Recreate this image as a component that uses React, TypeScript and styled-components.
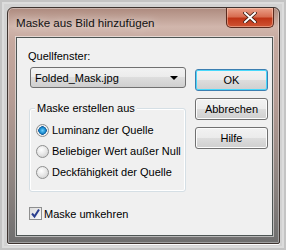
import styled, { createGlobalStyle } from 'styled-components';

const Global = createGlobalStyle`
  html, body {
    margin: 0;
    padding: 0;
    background: #d2d2d2;
  }
  body {
    font-family: "Liberation Sans", Arial, sans-serif;
    font-size: 11px;
    color: #000;
  }
`;

const radios = [
  { id: 1, label: 'Luminanz der Quelle', checked: true },
  { id: 2, label: 'Beliebiger Wert außer Null', checked: false },
  { id: 3, label: 'Deckfähigkeit der Quelle', checked: false },
];

export default function App() {
  return (
    <>
      <Global />
      <Screen>
        <Window>
          <TitleBar>
            <Title>Maske aus Bild hinzufügen</Title>
            <CloseButton>
              <svg width="14" height="11" viewBox="0 0 14 11">
                <path
                  d="M2 1 L12 10 M12 1 L2 10"
                  stroke="#3a1a10"
                  strokeWidth="3.6"
                  strokeLinecap="square"
                />
                <path
                  d="M2 1 L12 10 M12 1 L2 10"
                  stroke="#fff"
                  strokeWidth="2"
                  strokeLinecap="square"
                />
              </svg>
            </CloseButton>
          </TitleBar>
          <Client>
            <Main>
              <FieldLabel>Quellfenster:</FieldLabel>
              <Select>
                <span>Folded_Mask.jpg</span>
                <Caret />
              </Select>
              <Group>
                <Legend>Maske erstellen aus</Legend>
                {radios.map(({ id, label, checked }) => (
                  <Option key={id}>
                    <Radio $checked={checked} />
                    <span>{label}</span>
                  </Option>
                ))}
              </Group>
              <CheckRow>
                <CheckBox>
                  <svg width="11" height="11" viewBox="0 0 11 11">
                    <path
                      d="M2 5.5 L4.5 8.5 L9 1.5"
                      stroke="#2b3f8f"
                      strokeWidth="2"
                      fill="none"
                    />
                  </svg>
                </CheckBox>
                <span>Maske umkehren</span>
              </CheckRow>
            </Main>
            <Side>
              <Button $default>OK</Button>
              <Button>Abbrechen</Button>
              <Button>Hilfe</Button>
            </Side>
          </Client>
        </Window>
      </Screen>
    </>
  );
}

const Screen = styled.div`
  width: 286px;
  height: 250px;
  box-sizing: border-box;
  padding: 7px 6px 6px 7px;
  background: #d2d2d2;
  box-shadow: inset 0 0 0 2px #c4c4c4, inset 0 0 0 4px #dcdcdc;
`;

const Window = styled.div`
  height: 237px;
  box-sizing: border-box;
  display: flex;
  flex-direction: column;
  padding: 0 6px 7px 8px;
  border: 1px solid #3e3430;
  border-radius: 6px 6px 2px 2px;
  background: linear-gradient(
    180deg,
    #ad8a7e 0%,
    #d1b6ac 8%,
    #c6a99f 14%,
    #b59c94 40%,
    #8d8480 75%,
    #6e6e6e 100%
  );
  box-shadow: inset 0 0 0 1px rgba(255, 255, 255, 0.35), 0 1px 0 #fff;
`;

const TitleBar = styled.div`
  height: 29px;
  display: flex;
  align-items: flex-start;
  justify-content: space-between;
`;

const Title = styled.div`
  padding-top: 8px;
  font-size: 11.6px;
  color: #111;
  white-space: nowrap;
  text-shadow: 0 0 8px rgba(255, 255, 255, 0.8);
`;

const CloseButton = styled.div`
  width: 46px;
  height: 19px;
  margin-right: -1px;
  display: flex;
  align-items: center;
  justify-content: center;
  border: 1px solid #5a2a1e;
  border-top: none;
  border-radius: 0 0 5px 5px;
  background: linear-gradient(180deg, #eba18a 0%, #d86e52 45%, #bf3517 55%, #cf5434 100%);
  box-shadow: inset 0 0 0 1px rgba(255, 220, 200, 0.45);
`;

const Client = styled.div`
  flex: 1;
  display: flex;
  background: #f0f0f0;
  border: 1px solid #4d5554;
  box-shadow: 0 0 0 1px rgba(255, 255, 255, 0.5);
`;

const Main = styled.div`
  width: 168px;
  padding: 10px 0 0 11px;
  box-sizing: border-box;
  display: flex;
  flex-direction: column;
  white-space: nowrap;
`;

const FieldLabel = styled.div`
  height: 19px;
  line-height: 17px;
`;

const Select = styled.div`
  width: 156px;
  height: 21px;
  box-sizing: border-box;
  margin-left: 2px;
  padding: 0 7px 0 4px;
  display: flex;
  align-items: center;
  justify-content: space-between;
  border: 1px solid #707070;
  border-radius: 3px;
  background: linear-gradient(180deg, #f2f2f2 0%, #ebebeb 50%, #dddddd 50%, #cfcfcf 100%);
`;

const Caret = styled.div`
  width: 0;
  height: 0;
  border-left: 4px solid transparent;
  border-right: 4px solid transparent;
  border-top: 4px solid #000;
`;

const Group = styled.div`
  position: relative;
  margin: 20px 0 0 1px;
  width: 157px;
  height: 84px;
  box-sizing: border-box;
  padding: 13px 0 0 6px;
  border: 1px solid #d5dfe5;
  border-radius: 3px;
  box-shadow: inset 0 0 0 1px #fff;
  display: flex;
  flex-direction: column;
  gap: 5px;
`;

const Legend = styled.div`
  position: absolute;
  top: -8px;
  left: 5px;
  padding: 0 2px;
  background: #f0f0f0;
  line-height: 15px;
`;

const Option = styled.div`
  display: flex;
  align-items: center;
  gap: 3px;
  height: 16px;
`;

const Radio = styled.div<{ $checked?: boolean }>`
  width: 13px;
  height: 13px;
  box-sizing: border-box;
  border-radius: 50%;
  border: 1px solid #8e8f8f;
  background: ${({ $checked }) =>
    $checked
      ? 'radial-gradient(circle, #6fd0ff 0%, #1e8fd0 35%, #165e9c 52%, #f4f4f4 56%, #d8d8d8 100%)'
      : 'radial-gradient(circle at 40% 35%, #ffffff 0%, #e6e6e6 50%, #c8c8c8 100%)'};
`;

const CheckRow = styled.div`
  margin: 15px 0 0 1px;
  display: flex;
  align-items: center;
  gap: 2px;
`;

const CheckBox = styled.div`
  width: 13px;
  height: 13px;
  box-sizing: border-box;
  border: 1px solid #8e8f8f;
  background: linear-gradient(135deg, #dcdcdc, #fbfbfb);
  display: flex;
  align-items: center;
  justify-content: center;
`;

const Side = styled.div`
  padding: 31px 0 0 10px;
  display: flex;
  flex-direction: column;
  gap: 7px;
`;

const Button = styled.div<{ $default?: boolean }>`
  width: 73px;
  height: 22px;
  box-sizing: border-box;
  display: flex;
  align-items: center;
  justify-content: center;
  border: 1px solid ${({ $default }) => ($default ? '#3c7fb1' : '#707070')};
  border-radius: 3px;
  background: linear-gradient(180deg, #f2f2f2 0%, #ebebeb 50%, #dddddd 50%, #cfcfcf 100%);
  box-shadow: ${({ $default }) =>
    $default ? 'inset 0 0 0 1px #48d8fb' : 'inset 0 0 0 1px #fcfcfc'};
`;
